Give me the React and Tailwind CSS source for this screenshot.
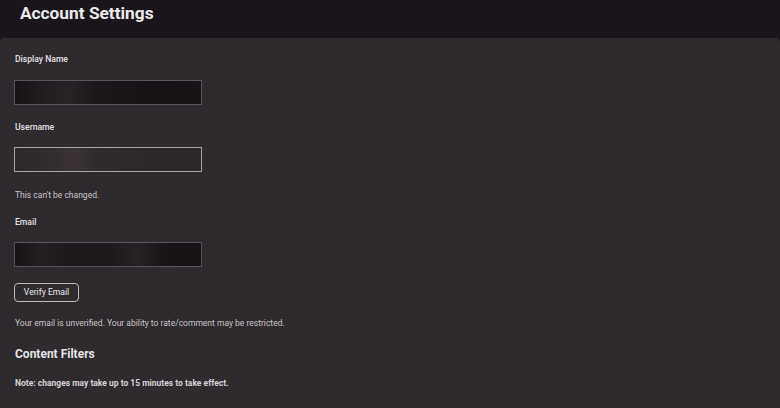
import { useState } from "react";

// Account settings page: dark header strip, then a panel with the profile
// form. The field contents are blurred in the capture, so inputs carry a soft
// gradient instead of text.
const font = { fontFamily: "Roboto, 'Liberation Sans', sans-serif" };

function Label({ children, className = "" }) {
  return (
    <div className={"text-[8.6px] leading-[12px] font-medium text-[#e4e2e4] " + className}>
      {children}
    </div>
  );
}

function Field({ className = "" }) {
  return <div className={"w-[188px] h-[25px] border " + className} />;
}

export default function App() {
  const [verifying, setVerifying] = useState(false);

  return (
    <div style={font} className="w-[780px] h-[408px] overflow-hidden bg-[#19151a]">
      <header className="h-[38px] px-[20px] pt-[2px]">
        <h1 className="text-[17.3px] leading-[22px] font-bold text-[#ebe9eb]">Account Settings</h1>
      </header>

      <main className="h-[370px] rounded-t-[4px] bg-[#2e2a2e] px-[14px] pt-[15px]">
        <Label className="pl-px">Display Name</Label>
        <Field className="mt-[15px] border-[#58545a] bg-[linear-gradient(90deg,#161216_0%,#1e1a1e_12%,#262226_28%,#1a161a_45%,#161215_70%,#171316_100%)]" />

        <Label className="mt-[16px] pl-px">Username</Label>
        <Field className="mt-[14px] border-[#a9a6aa] bg-[linear-gradient(90deg,#2c282c_0%,#322d31_20%,#3a3236_32%,#302b2f_45%,#2b272b_70%,#2b272b_100%)]" />

        <p className="mt-[17px] pl-px text-[8.5px] leading-[12px] text-[#c9c6c9]">This can't be changed.</p>

        <Label className="mt-[15px] pl-px">Email</Label>
        <Field className="mt-[14px] border-[#58545a] bg-[linear-gradient(90deg,#161216_0%,#231f23_14%,#1b171b_30%,#1c181c_50%,#252125_66%,#171316_80%,#161215_100%)]" />

        <button
          onClick={() => setVerifying(true)}
          className="mt-[16px] flex h-[19px] w-[65px] items-center justify-center rounded-[4px] border border-[#bdbabe] text-[8.6px] text-[#ebe9eb]"
        >
          {verifying ? "Sending…" : "Verify Email"}
        </button>

        <p className="mt-[15px] pl-px text-[8.5px] leading-[12px] text-[#c9c6c9]">
          Your email is unverified. Your ability to rate/comment may be restricted.
        </p>

        <h2 className="mt-[17px] pl-px text-[12px] leading-[16px] font-bold text-[#e4e2e4]">Content Filters</h2>

        <p className="mt-[15px] pl-px text-[8.5px] leading-[12px] font-bold text-[#d6d3d6]">
          Note: changes may take up to 15 minutes to take effect.
        </p>
      </main>
    </div>
  );
}
